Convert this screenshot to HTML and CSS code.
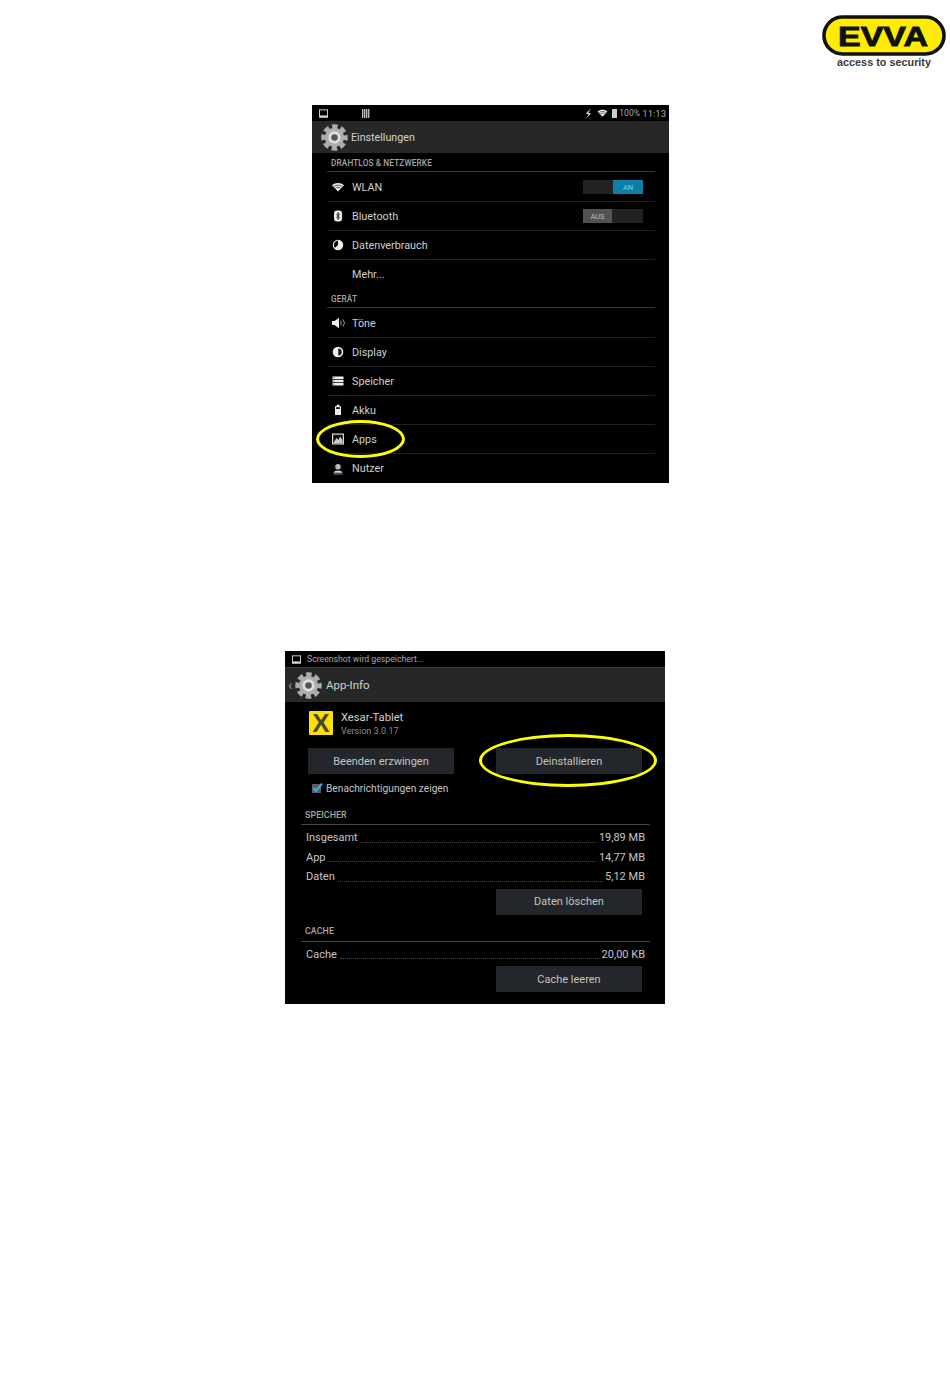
FILE: index.html
```html
<!DOCTYPE html>
<html lang="de">
<head>
<meta charset="utf-8">
<title>EVVA Xesar</title>
<link rel="stylesheet" href="styles.css">
</head>
<body>
<svg class="defs" width="0" height="0" aria-hidden="true">
  <symbol id="gear" viewBox="0 0 28 28">
    <circle cx="14" cy="14" r="10" fill="#adadad"/>
    <circle cx="14" cy="14" r="11" fill="none" stroke="#adadad" stroke-width="5.5" stroke-dasharray="5.4 3.24" stroke-dashoffset="2.7"/>
    <circle cx="14" cy="14" r="6.4" fill="#dedede"/>
    <circle cx="14" cy="14" r="3.4" fill="#555"/>
  </symbol>
  <symbol id="wifi" viewBox="0 0 12 12">
    <path d="M0 4.2C3.4 1.2 8.6 1.2 12 4.2L6 10.5Z" fill="#eee"/>
    <path d="M1.9 5.4C4.3 3.7 7.7 3.7 10.1 5.400M3.400 7.100C5 6 7 6 8.600 7.100" fill="none" stroke="#111" stroke-width=".7"/>
  </symbol>
  <symbol id="imgicon" viewBox="0 0 12 12">
    <rect x=".6" y="1.1" width="10.8" height="9.8" fill="none" stroke="#ddd" stroke-width="1.2"/>
    <path d="M1 11V8.6H11V11Z" fill="#ddd"/>
  </symbol>
</svg>
<main class="page">
  <header class="logo-row">
    <svg class="logo" viewBox="0 0 124 55" role="img" aria-label="EVVA access to security">
      <rect x="2" y="2" width="120" height="37" rx="18.5" fill="#ffec00" stroke="#111" stroke-width="3.6"/>
      <text class="logo-word" x="61" y="31" text-anchor="middle" textLength="90" lengthAdjust="spacingAndGlyphs">EVVA</text>
      <text class="logo-tag" x="62" y="51" text-anchor="middle" textLength="94" lengthAdjust="spacingAndGlyphs">access to security</text>
    </svg>
  </header>

  <section class="screen screen-settings">
    <div class="status">
      <svg class="status-img" viewBox="0 0 12 12"><use href="#imgicon"/></svg>
      <span class="barcode"></span>
      <span class="status-right">
        <svg class="st-mute" viewBox="0 0 8 12"><path d="M7 0 1 6l3 1-3 5 6-6-3-1Z" fill="#ccc"/></svg>
        <svg class="st-wifi" viewBox="0 0 12 12"><use href="#wifi"/></svg>
        <span class="st-batt"></span>
        <span class="st-pct">100%</span>
        <span class="st-time">11:13</span>
      </span>
    </div>
    <div class="actionbar bar-settings">
      <svg class="gear" viewBox="0 0 28 28"><use href="#gear"/></svg>
      <span class="bar-title">Einstellungen</span>
    </div>
    <div class="settings-list">
      <h2 class="cat">DRAHTLOS &amp; NETZWERKE</h2>
      <div class="row row-first">
        <svg class="ico" viewBox="0 0 12 12"><use href="#wifi"/></svg><span>WLAN</span>
        <span class="toggle"><span class="t-part"></span><span class="t-part t-on">AN</span></span>
      </div>
      <div class="row">
        <svg class="ico" viewBox="0 0 12 12"><rect x="2" y=".5" width="8" height="11" rx="3" fill="#eee"/><path d="M4.3 3.8 7.6 7.8 6 9.5V2.5L7.6 4.2 4.3 8.2" fill="none" stroke="#111" stroke-width=".8"/></svg><span>Bluetooth</span>
        <span class="toggle"><span class="t-part t-off">AUS</span><span class="t-part"></span></span>
      </div>
      <div class="row">
        <svg class="ico" viewBox="0 0 12 12"><circle cx="6" cy="6" r="4.7" fill="none" stroke="#eee" stroke-width="1.1"/><path d="M6 6V1.3A4.7 4.7 0 1 1 2.6 9.3Z" fill="#eee"/></svg><span>Datenverbrauch</span>
      </div>
      <div class="row row-last"><span class="ico-gap"></span><span>Mehr...</span></div>
      <h2 class="cat">GERÄT</h2>
      <div class="row row-first">
        <svg class="ico ico-wide" viewBox="0 0 14 12"><path d="M0 4H2.5L7 .8V11.2L2.5 8H0Z" fill="#eee"/><path d="M9 3.5V8.5M11 2.500 12.500 6 11 9.500" fill="none" stroke="#aaa" stroke-width=".9"/></svg><span>Töne</span>
      </div>
      <div class="row">
        <svg class="ico" viewBox="0 0 12 12"><circle cx="6" cy="6" r="5.300" fill="#eee"/><path d="M6.300 2.600a3.400 3.400 0 0 1 0 6.800Z" fill="#111"/></svg><span>Display</span>
      </div>
      <div class="row">
        <svg class="ico" viewBox="0 0 12 12"><path d="M.5 1.500H11.500V4H.5ZM.5 4.800H11.500V7.200H.5ZM.5 8H11.500V10.500H.5Z" fill="#eee"/><path d="M1.500 2.700H2.500M1.500 6H2.500M1.500 9.200H2.500" stroke="#222" stroke-width=".8"/></svg><span>Speicher</span>
      </div>
      <div class="row">
        <svg class="ico" viewBox="0 0 12 12"><path d="M4.600 .8H7.400V2.200H9V11H3V2.200H4.600Z" fill="#eee"/><rect x="4" y="3.200" width="4" height="1.800" fill="#222"/></svg><span>Akku</span>
      </div>
      <div class="row">
        <svg class="ico" viewBox="0 0 12 12"><rect x=".6" y="1.100" width="10.800" height="9.800" fill="#111" stroke="#ddd" stroke-width="1.200"/><path d="M1.500 9.800 4.500 5 6.500 7 8 3.500 10.500 7V10H1.500Z" fill="#ccc"/></svg><span>Apps</span>
      </div>
      <div class="row row-last">
        <svg class="ico" viewBox="0 0 12 12"><circle cx="6" cy="3.800" r="2.800" fill="#bbb"/><path d="M1.500 9.800C2 7.200 10 7.200 10.500 9.800Z" fill="#ddd"/><path d="M1.500 11H10.500" stroke="#999" stroke-width=".9"/></svg><span>Nutzer</span>
      </div>
    </div>
    <span class="ring ring-apps"></span>
  </section>

  <section class="screen screen-appinfo">
    <div class="status">
      <svg class="status-img" viewBox="0 0 12 12"><use href="#imgicon"/></svg>
      <span class="status-note">Screenshot wird gespeichert...</span>
    </div>
    <div class="actionbar bar-app">
      <span class="back">‹</span>
      <svg class="gear gear-app" viewBox="0 0 28 28"><use href="#gear"/></svg>
      <span class="bar-title">App-Info</span>
    </div>
    <div class="app-head">
      <span class="app-icon">X</span>
      <div class="app-text">
        <div class="app-name">Xesar-Tablet</div>
        <div class="app-ver">Version 3.0.17</div>
      </div>
    </div>
    <div class="btn-pair">
      <span class="btn">Beenden erzwingen</span>
      <span class="btn">Deinstallieren</span>
    </div>
    <div class="notify">
      <svg class="check" viewBox="0 0 12 12"><rect x="1" y="2" width="9" height="9" fill="#5a6066"/><path d="M2.500 6 5 9 11 1.500" fill="none" stroke="#33b5e5" stroke-width="2"/></svg>
      <span>Benachrichtigungen zeigen</span>
    </div>
    <h2 class="cat2 cat2-mem">SPEICHER</h2>
    <div class="kv kv-first"><span>Insgesamt</span><i></i><span>19,89 MB</span></div>
    <div class="kv"><span>App</span><i></i><span>14,77 MB</span></div>
    <div class="kv"><span>Daten</span><i></i><span>5,12 MB</span></div>
    <div class="btn-right"><span class="btn">Daten löschen</span></div>
    <h2 class="cat2 cat2-cache">CACHE</h2>
    <div class="kv kv-first"><span>Cache</span><i></i><span>20,00 KB</span></div>
    <div class="btn-right"><span class="btn">Cache leeren</span></div>
    <span class="ring ring-uninstall"></span>
  </section>
</main>
</body>
</html>
```
FILE: styles.css
```css
* { box-sizing: border-box; }
html, body { margin: 0; padding: 0; background: #fff; }
body { font-family: Roboto, "Liberation Sans", sans-serif; }
.defs { position: absolute; }
.page { width: 950px; height: 1387px; overflow: hidden; display: flex; flex-direction: column; }

.logo-row { display: flex; justify-content: flex-end; padding: 15px 4px 0 0; height: 70px; }
.logo { width: 124px; height: 55px; display: block; }
.logo-word { font: 700 28px "Liberation Sans", sans-serif; fill: #111; stroke: #111; stroke-width: .9px; }
.logo-tag { font: 700 11.5px "Liberation Sans", sans-serif; fill: #3a3a3a; }

.screen { position: relative; background: #000; color: #c9c9c9; flex: none; }
.screen-settings { width: 357px; height: 378px; margin: 35px 0 0 312px; }
.screen-appinfo { width: 380px; height: 353px; margin: 168px 0 0 285px; }

.status { height: 16px; display: flex; align-items: center; padding: 0 3px 0 7px; font-size: 8.5px; color: #a8a8a8; }
.status-img { width: 9px; height: 9px; flex: none; }
.barcode { width: 8px; height: 9px; margin-left: 34px; background: repeating-linear-gradient(90deg, #bbb 0 1px, #444 1px 2px); }
.status-right { margin-left: auto; display: flex; align-items: center; }
.st-mute { width: 7px; height: 11px; }
.st-wifi { width: 11px; height: 10px; margin-left: 5px; }
.st-batt { width: 5px; height: 9px; margin-left: 4px; background: #ccc; }
.st-pct { margin-left: 2px; width: 23px; }
.st-time { font-size: 9.5px; }
.status-note { margin-left: 6px; font-size: 8.7px; }

.actionbar { display: flex; align-items: center; background: #272727; color: #d2d2d2; font-size: 10.7px; }
.bar-settings { height: 32px; padding-left: 9px; }
.bar-app { height: 35px; padding-left: 3px; border-top: 1px solid #3a3a3a; }
.gear { width: 27px; height: 27px; flex: none; }
.gear-app { margin-left: 2px; }
.bar-title { margin-left: 3px; }
.bar-app .bar-title { margin-left: 4px; font-size: 11.5px; }
.back { font-size: 15px; color: #999; width: 5px; line-height: 1; }

.settings-list { padding: 0 14px 0 15px; font-size: 10.8px; }
.cat { margin: 0; height: 19px; padding: 2px 0 0 4px; font-size: 8.2px; font-weight: 500; letter-spacing: .15px; color: #a5a5a5; display: flex; align-items: center; border-bottom: 1px solid #3a3a3a; }
.row { height: 29px; display: flex; align-items: center; border-bottom: 1px solid #1f1f1f; padding-left: 5px; color: #cfcfcf; }
.row-first { height: 30px; padding-top: 1px; }
.row-last { border-bottom: 0; }
.ico { width: 12px; height: 12px; margin-right: 8px; flex: none; }
.ico-wide { width: 14px; margin: 0 6px 0 0; }
.ico-gap { width: 20px; flex: none; }
.toggle { margin-left: auto; margin-right: 12px; display: flex; width: 60px; height: 14px; background: #222; }
.t-part { width: 30px; font-size: 7.5px; display: flex; align-items: center; justify-content: center; color: #bbb; }
.t-on { background: #0b7fa6; color: #8fc8dc; }
.t-off { background: #525252; width: 29px; }

.app-head { display: flex; padding: 9px 0 0 24px; height: 46px; }
.app-icon { width: 24px; height: 24px; border-radius: 1px; background: #ffdf00; color: #4a4a3c; font: 900 26px/24px "Liberation Sans", sans-serif; text-align: center; flex: none; }
.app-text { margin-left: 8px; }
.app-name { font-size: 11.2px; line-height: 13px; color: #cfcfcf; }
.app-ver { font-size: 9px; line-height: 11px; margin-top: 2px; color: #8d8d8d; }
.btn-pair { display: flex; gap: 42px; padding-left: 23px; }
.btn { width: 146px; height: 26px; background: #23272b; display: flex; align-items: center; justify-content: center; font-size: 11px; color: #c4c4c4; flex: none; }
.notify { display: flex; align-items: center; height: 14px; margin-top: 7px; padding-left: 26px; font-size: 10.2px; color: #c4c4c4; }
.check { width: 12px; height: 12px; margin-right: 3px; flex: none; }
.cat2 { margin: 0 15px 0 16px; padding-left: 4px; height: 20px; font-size: 8.8px; font-weight: 500; letter-spacing: .1px; color: #a8a8a8; display: flex; align-items: center; border-bottom: 1px solid #444; }
.cat2-mem { margin-top: 10px; }
.cat2-cache { margin-top: 7px; }
.kv { margin: 0 20px 0 21px; height: 19.5px; display: flex; align-items: center; font-size: 11px; color: #c6c6c6; }
.kv-first { margin-top: 3px; }
.kv i { flex: 1; align-self: flex-end; height: 5px; margin: 0 2px 5px 3px; border-bottom: 1px dotted #444; }
.btn-right { display: flex; padding-left: 211px; margin-top: 2px; }

.ring { position: absolute; border: 3px solid #ffff00; border-radius: 50%; }
.ring-apps { left: 4px; top: 315px; width: 89px; height: 38px; }
.ring-uninstall { left: 194px; top: 83px; width: 178px; height: 53px; }
```
